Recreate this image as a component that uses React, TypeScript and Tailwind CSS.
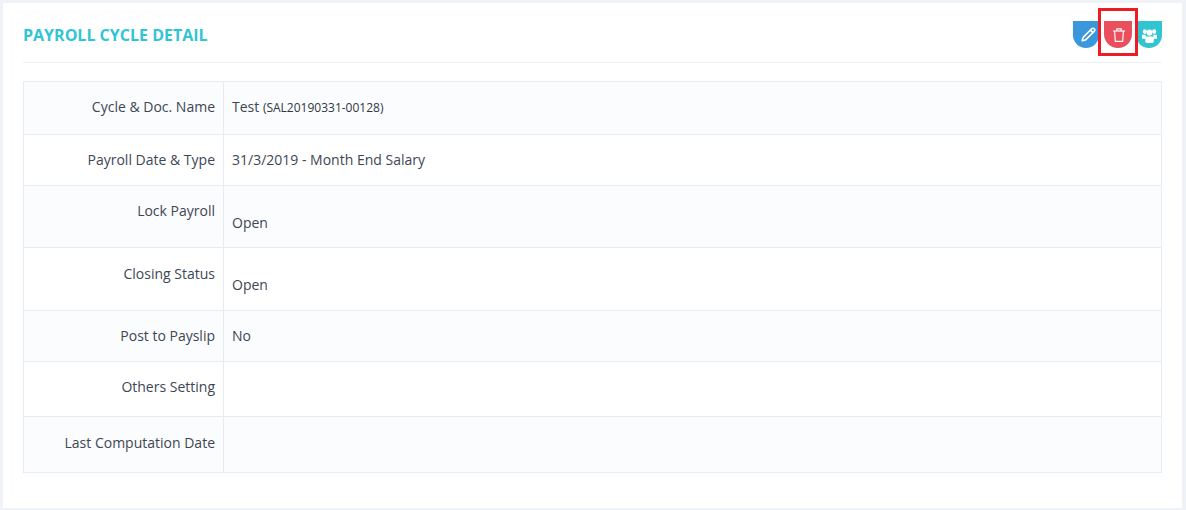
import { Pencil } from "lucide-react";

const rows = [
  { label: "Cycle & Doc. Name", h: "h-[53px]", pad: "pb-[4px]", shade: true, value: <>Test <span className="text-[12px] text-[#2f3742]">(SAL20190331-00128)</span></> },
  { label: "Payroll Date & Type", h: "h-[51px]", pad: "pb-[2px]", shade: false, value: "31/3/2019 - Month End Salary" },
  { label: "Lock Payroll", h: "h-[62px]", pad: "pt-[14px]", shade: true, value: "Open", low: true },
  { label: "Closing Status", h: "h-[63px]", pad: "pt-[15px]", shade: false, value: "Open", low: true },
  { label: "Post to Payslip", h: "h-[51px]", pad: "pb-[2px]", shade: true, value: "No" },
  { label: "Others Setting", h: "h-[55px]", pad: "pb-[6px]", shade: false, value: "" },
  { label: "Last Computation Date", h: "h-[56px]", pad: "pb-[4px]", shade: true, value: "" },
];

function TrashIcon() {
  return (
    <svg className="mt-[1px] ml-[2px]" width="12" height="14" viewBox="0 0 12 14" fill="none" stroke="currentColor" strokeWidth="1.15">
      <path d="M0 3H12" />
      <path d="M3.8 3V0.8H8.2V3" />
      <path d="M1.6 3L2.3 13.4H9.7L10.4 3" />
    </svg>
  );
}

function UsersIcon() {
  return (
    <svg className="mt-[3px] ml-[1px]" width="15" height="14" viewBox="0 0 17 14" preserveAspectRatio="none" fill="currentColor">
      <circle cx="3.2" cy="2.6" r="2.3" />
      <circle cx="13.8" cy="2.6" r="2.3" />
      <circle cx="8.5" cy="3.6" r="3.2" />
      <path d="M0 5.8H4.2L4.4 9.8H0Z" />
      <path d="M12.8 5.8H17V9.8H12.6Z" />
      <path d="M5.2 7.4H11.8C12.8 7.4 13.4 8.4 13.4 9.6V12C13.4 13.2 12.6 14 11.4 14H5.6C4.4 14 3.6 13.2 3.6 12V9.6C3.6 8.4 4.2 7.4 5.2 7.4Z" />
    </svg>
  );
}

export default function App() {
  return (
    <div className="h-[510px] w-[1186px] overflow-hidden bg-[#eff3f8] pt-[3px] pr-[4px] pb-[2px] pl-[3px] font-['Open_Sans','Noto_Sans',sans-serif] text-[14px] text-[#3d4654]">
      <div className="relative h-full bg-white px-[20px]">
        {/* Header */}
        <div className="flex h-[60px] items-start justify-between border-b border-[#eef0f3]">
          <h2 className="mt-[21px] text-[16px] leading-[22px] font-bold text-[#30c5d5] uppercase">Payroll Cycle Detail</h2>
          <div className="mt-[18px] flex">
            <div className="flex h-[27px] w-[26px] items-center justify-center rounded-b-[13px] bg-[#3a97dc] text-white">
              <Pencil className="ml-[5px]" size={15} strokeWidth={2.6} />
            </div>
            <div className="ml-[5px] flex h-[27px] w-[28px] items-center justify-center rounded-b-[14px] bg-[#ea4f5d] text-white">
              <TrashIcon />
            </div>
            <div className="ml-[4px] flex h-[27px] w-[26px] items-center justify-center rounded-b-[13px] bg-[#30c5d0] text-white">
              <UsersIcon />
            </div>
          </div>
          {/* highlight box drawn over the delete button */}
          <div className="absolute top-[5px] right-[44px] h-[48px] w-[40px] border-[3px] border-[#ed1c24]" />
        </div>

        {/* Detail table */}
        <div className="mt-[18px] border-x border-t border-[#e7ecf1]">
          {rows.map((r) => (
            <div key={r.label} className={`flex border-b border-[#e7ecf1] ${r.h} ${r.shade ? "bg-[#fbfcfe]" : "bg-white"}`}>
              <div className={`flex w-[200px] shrink-0 justify-end border-r border-[#e7ecf1] pr-[8px] ${r.pad} ${r.low ? "" : "items-center"}`}>
                {r.label}
              </div>
              <div className={`flex pl-[8px] ${r.low ? "pt-[26px]" : `items-center ${r.pad}`}`}>
                <div>{r.value}</div>
              </div>
            </div>
          ))}
        </div>
      </div>
    </div>
  );
}
